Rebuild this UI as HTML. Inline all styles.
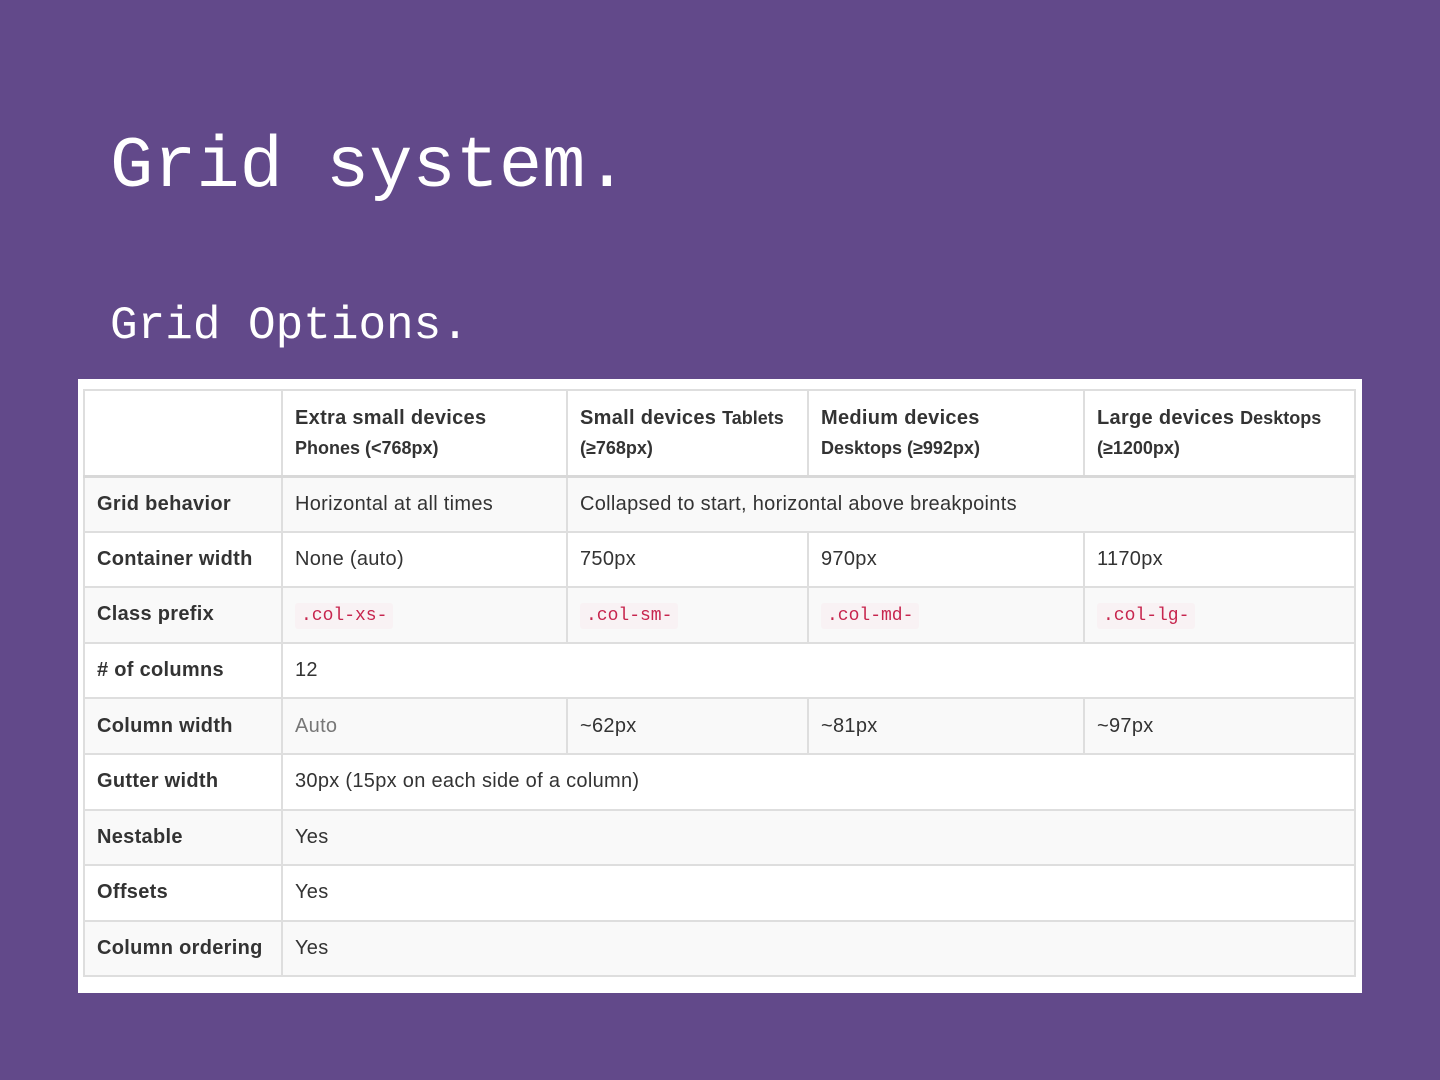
<!DOCTYPE html>
<html><head><meta charset="utf-8"><style>
body{margin:0;width:1440px;height:1080px;background:#62498a;position:relative;overflow:hidden;font-family:"Liberation Sans",sans-serif}
.h1{position:absolute;left:110px;top:122px;font-family:"Liberation Mono",monospace;font-size:72px;color:#fff;line-height:90px;white-space:pre}
.h2{position:absolute;left:110px;top:296px;font-family:"Liberation Mono",monospace;font-size:46px;color:#fff;line-height:60px;white-space:pre}
.box{position:absolute;left:78px;top:379px;width:1284px;height:614px;background:#fff}
table{position:absolute;left:5px;top:10px;border-collapse:collapse;table-layout:fixed;width:1271px}
td,th{border:2px solid #dedede;padding:0 12px;font-size:20px;letter-spacing:0.3px;color:#333;text-align:left;vertical-align:middle;white-space:nowrap;overflow:hidden}
th{font-weight:bold}
thead tr{height:86px}
tbody tr{height:55.6px}
thead th{vertical-align:top;padding-top:12px;line-height:30px;border-bottom:3px solid #d8d8d8;white-space:normal}
thead th small{font-size:18px;letter-spacing:0}
tbody tr:nth-child(odd) td,tbody tr:nth-child(odd) th{background:#f9f9f9}
code{font-family:"Liberation Mono",monospace;font-size:18px;letter-spacing:0;color:#c7254e;background:#f9f2f4;padding:3px 6px;border-radius:3px}
.m{color:#777}
</style></head><body>
<div class="h1">Grid system.</div>
<div class="h2">Grid Options.</div>
<div class="box">
<table>
<colgroup><col style="width:198px"><col style="width:285px"><col style="width:241px"><col style="width:276px"><col style="width:271px"></colgroup>
<thead><tr><th></th>
<th>Extra small devices<br><small>Phones (&lt;768px)</small></th>
<th>Small devices <small>Tablets (≥768px)</small></th>
<th>Medium devices<br><small>Desktops (≥992px)</small></th>
<th>Large devices <small>Desktops (≥1200px)</small></th></tr></thead>
<tbody>
<tr><th>Grid behavior</th><td>Horizontal at all times</td><td colspan="3">Collapsed to start, horizontal above breakpoints</td></tr>
<tr><th>Container width</th><td>None (auto)</td><td>750px</td><td>970px</td><td>1170px</td></tr>
<tr><th>Class prefix</th><td><code>.col-xs-</code></td><td><code>.col-sm-</code></td><td><code>.col-md-</code></td><td><code>.col-lg-</code></td></tr>
<tr><th># of columns</th><td colspan="4">12</td></tr>
<tr><th>Column width</th><td class="m">Auto</td><td>~62px</td><td>~81px</td><td>~97px</td></tr>
<tr><th>Gutter width</th><td colspan="4">30px (15px on each side of a column)</td></tr>
<tr><th>Nestable</th><td colspan="4">Yes</td></tr>
<tr><th>Offsets</th><td colspan="4">Yes</td></tr>
<tr><th>Column ordering</th><td colspan="4">Yes</td></tr>
</tbody></table>
</div>
</body></html>
